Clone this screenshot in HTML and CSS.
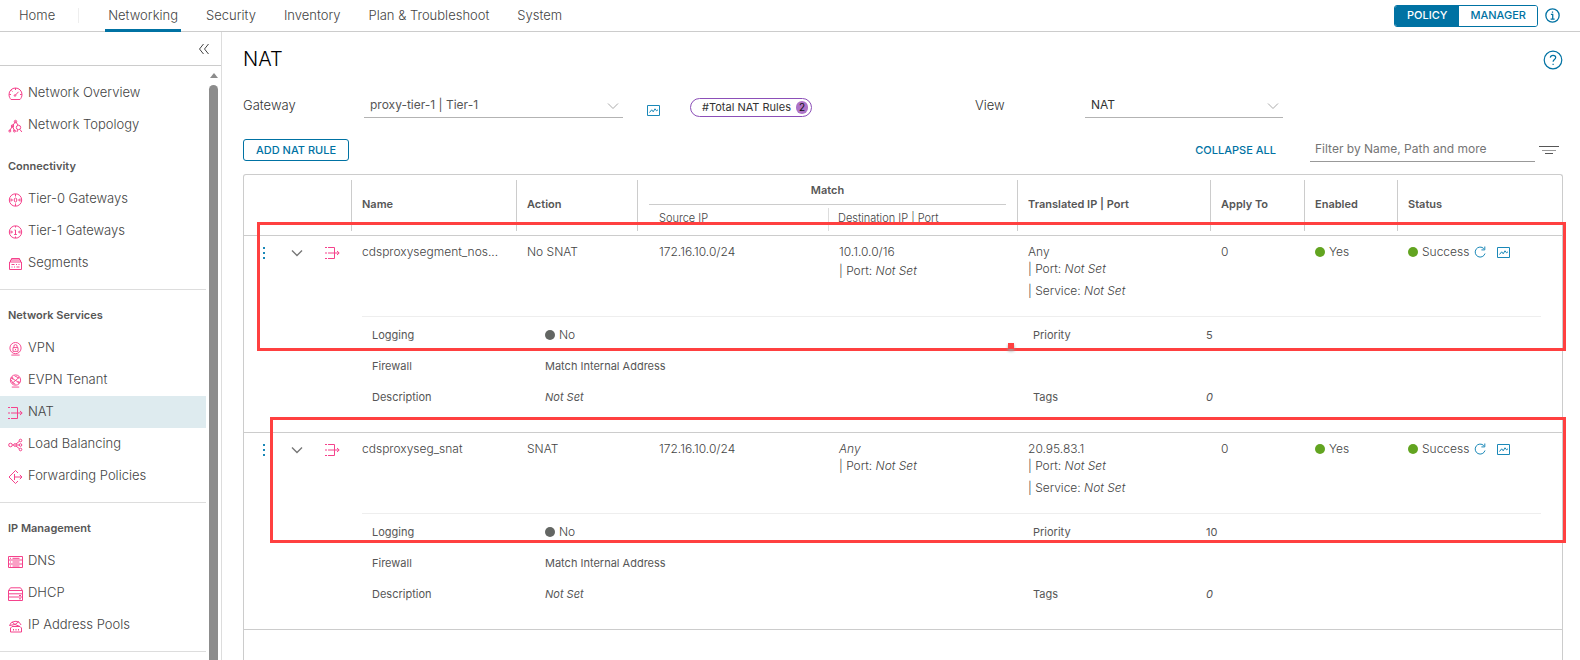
FILE: index.html
```html
<!DOCTYPE html>
<html lang="en">
<head>
<meta charset="utf-8">
<title>NAT - Networking</title>
<link rel="stylesheet" href="styles.css">
</head>
<body>
<svg class="sprite" aria-hidden="true">
  <symbol id="i-overview" viewBox="0 0 15 14"><path d="M3 12.500h9c1.200-1.300 2-3 2-5a6.500 6.500 0 0 0-13 0c0 2 .8 3.700 2 5z"/><path d="M7.500 8l3-3.200M7.500 1v2M1.200 7.500H3M12 7.500h1.800M3.500 3.500l1 1"/><circle cx="7" cy="8.500" r=".8"/></symbol>
  <symbol id="i-topology" viewBox="0 0 15 14"><path d="M7.500 2.500L4.500 7M7.500 2.500L10 6M4.500 7l-3 5M4.500 7l2 5"/><circle cx="7.500" cy="2.500" r="1.200"/><circle cx="4.500" cy="7" r="1.200"/><circle cx="1.800" cy="12" r="1"/><circle cx="6.500" cy="12" r="1"/><circle cx="10.500" cy="8.500" r="2.200"/><path d="M12 10.500l1.800 2.500M9.500 10.500L9 13"/></symbol>
  <symbol id="i-tier0" viewBox="0 0 15 14"><circle cx="7.500" cy="7" r="6.200"/><path d="M7.500 1v2.500M7.500 10.500V13M1.500 7h2.500M11 7h2.500M3 5.500L4.500 7 3 8.500M12 5.500L10.500 7 12 8.500"/><ellipse cx="7.500" cy="7" rx="1.300" ry="2"/></symbol>
  <symbol id="i-tier1" viewBox="0 0 15 14"><circle cx="7.500" cy="7" r="6.200"/><path d="M7.500 1v1.500M7.500 11.500V13M1.500 7h2.500M11 7h2.500M3 5.500L4.500 7 3 8.500M12 5.500L10.500 7 12 8.500M6.500 5h1v4.500M6.200 9.500h2.600"/></symbol>
  <symbol id="i-segments" viewBox="0 0 15 14"><path d="M1.500 5h12v7.500h-12zM2.500 5V3h10v2M3.500 3V1.500h8V3M3.500 7.500h3M8 7.500h1M10.500 7.500h1M3.500 10h1M6 10h1M8.500 10h3"/></symbol>
  <symbol id="i-vpn" viewBox="0 0 15 15"><circle cx="7.500" cy="6.500" r="6"/><path d="M4.800 6h5.400v4H4.800zM5.800 6V4.500a1.700 1.700 0 0 1 3.400 0V6M7.500 7.500v1.200M3 14h9"/></symbol>
  <symbol id="i-evpn" viewBox="0 0 15 15"><circle cx="7.500" cy="6.500" r="5.500"/><path d="M3.500 4.500l7.500 4.500M11.500 3.500L4.500 9.500M6.500 2l5 2.500M3 6.500l1.500 3 3 1.500M3.500 14h8"/><circle cx="4" cy="4.500" r=".8"/><circle cx="11" cy="9" r=".8"/></symbol>
  <symbol id="i-nat" viewBox="0 0 15 14"><path d="M0 1.500h2M3 1.500h6.500v11H3M0 12.500h2M0 7h2M3 7h11M12 5l2.200 2L12 9"/></symbol>
  <symbol id="i-lb" viewBox="0 0 15 14"><circle cx="2.500" cy="7" r="1.800"/><circle cx="7" cy="7" r="1.300"/><circle cx="12.500" cy="2.500" r="1.300"/><circle cx="12.500" cy="7" r="1.300"/><circle cx="12.500" cy="11.500" r="1.300"/><path d="M4.300 7h1.500M8.300 7h3M8 6l3.400-2.700M8 8l3.400 2.700"/></symbol>
  <symbol id="i-forward" viewBox="0 0 15 14"><path d="M10 3L7.500.5 1 7l6.500 6.500L10 11M6.500 4v6M6.500 7h7.500M11.800 4.800L14 7l-2.200 2.200"/></symbol>
  <symbol id="i-dns" viewBox="0 0 15 14"><path d="M.5 1.500h14v11H.5zM.5 5h14M.5 9h14M2 3.300h1M4.500 3.300h7M2 7h1M4.500 7h7M2 11h1M4.500 11h7"/></symbol>
  <symbol id="i-dhcp" viewBox="0 0 15 14"><path d="M.5 3.500L2.500.8h10l2 2.700v10H.5zM.5 3.500h14M.5 6.800h14M.5 10h14M11 8.500h2M11 11.800h2"/></symbol>
  <symbol id="i-pools" viewBox="0 0 15 14"><path d="M1.500 6.500A6 5.500 0 0 1 13 6M4 3l3 2.500L11 2.500M1.500 6.500L7 5.500l5 2M2.500 9l1.500-1.500h8l1.500 1.500v4h-11zM5.500 11.500V10M8 11.500V10M10.500 11.500V10"/></symbol>
  <symbol id="i-chart" viewBox="0 0 13 11"><path d="M.5.5h12v10H.5zM2.500 7.500l2.200-2.700 1.500 2 1.800-3 1.500 2 1.500-1"/></symbol>
  <symbol id="i-refresh" viewBox="0 0 12 12"><path d="M9.800 2.600A5 5 0 1 0 11 7.500M10.800.5v3.400H7.400"/></symbol>
  <symbol id="i-caret" viewBox="0 0 12 8"><path d="M1 1.500l5 5 5-5"/></symbol>
</svg>

<header class="topbar">
  <nav class="topnav" aria-label="Primary">
    <a class="topnav-link topnav-home" href="#home">Home</a>
    <a class="topnav-link is-active" href="#networking" aria-current="page">Networking</a>
    <a class="topnav-link" href="#security">Security</a>
    <a class="topnav-link" href="#inventory">Inventory</a>
    <a class="topnav-link" href="#plan">Plan &amp; Troubleshoot</a>
    <a class="topnav-link" href="#system">System</a>
  </nav>
  <div class="mode">
    <button class="mode-btn is-on" type="button">POLICY</button>
    <button class="mode-btn" type="button">MANAGER</button>
  </div>
  <button class="icon-btn" type="button" aria-label="Information"><svg class="icon-info" viewBox="0 0 14 14"><circle cx="7" cy="7" r="6.200"/><path d="M5.500 6H7.200v4.300M5.200 10.300h3.800M7 3.300v1.200"/></svg></button>
</header>

<div class="shell">
  <aside class="sidebar">
    <div class="sidebar-head">
      <button class="icon-btn" type="button" aria-label="Collapse menu"><svg class="icon-collapse" viewBox="0 0 12 12"><path d="M5.500 1L1.500 6l4 5M10.500 1L6.500 6l4 5"/></svg></button>
    </div>
    <div class="sidebar-body">
      <nav class="menu" aria-label="Networking">
        <a class="menu-link" href="#overview"><svg class="pink"><use href="#i-overview"/></svg>Network Overview</a>
        <a class="menu-link" href="#topology"><svg class="pink"><use href="#i-topology"/></svg>Network Topology</a>
        <section class="menu-group menu-first">
          <h2 class="menu-title">Connectivity</h2>
          <a class="menu-link" href="#tier0"><svg class="pink"><use href="#i-tier0"/></svg>Tier-0 Gateways</a>
          <a class="menu-link" href="#tier1"><svg class="pink"><use href="#i-tier1"/></svg>Tier-1 Gateways</a>
          <a class="menu-link" href="#segments"><svg class="pink"><use href="#i-segments"/></svg>Segments</a>
        </section>
        <section class="menu-group">
          <h2 class="menu-title">Network Services</h2>
          <a class="menu-link" href="#vpn"><svg class="pink"><use href="#i-vpn"/></svg>VPN</a>
          <a class="menu-link" href="#evpn"><svg class="pink"><use href="#i-evpn"/></svg>EVPN Tenant</a>
          <a class="menu-link is-current" href="#nat" aria-current="page"><svg class="pink"><use href="#i-nat"/></svg>NAT</a>
          <a class="menu-link" href="#lb"><svg class="pink"><use href="#i-lb"/></svg>Load Balancing</a>
          <a class="menu-link" href="#forwarding"><svg class="pink"><use href="#i-forward"/></svg>Forwarding Policies</a>
        </section>
        <section class="menu-group">
          <h2 class="menu-title">IP Management</h2>
          <a class="menu-link" href="#dns"><svg class="pink"><use href="#i-dns"/></svg>DNS</a>
          <a class="menu-link" href="#dhcp"><svg class="pink"><use href="#i-dhcp"/></svg>DHCP</a>
          <a class="menu-link" href="#pools"><svg class="pink"><use href="#i-pools"/></svg>IP Address Pools</a>
        </section>
        <div class="menu-group"></div>
      </nav>
      <div class="scroll"><span class="scroll-arrow"></span><span class="scroll-thumb"></span></div>
    </div>
  </aside>

  <main class="main">
    <div class="title-row">
      <h1 class="title">NAT</h1>
      <button class="icon-btn" type="button" aria-label="Help"><svg class="icon-help" viewBox="0 0 20 20"><circle cx="10" cy="10" r="8.800"/><path d="M7.300 7.600c.2-1.500 1.300-2.200 2.700-2.200s2.700.8 2.700 2.200c0 1.900-2.600 2-2.600 4.100M10.100 13.700v1.400"/></svg></button>
    </div>

    <div class="controls">
      <label class="label label-gateway" for="gateway">Gateway</label>
      <div class="pick pick-gateway">
        <select class="select select-soft" id="gateway"><option>proxy-tier-1 | Tier-1</option></select>
        <svg class="pick-caret"><use href="#i-caret"/></svg>
      </div>
      <button class="icon-btn chart-gateway" type="button" aria-label="Gateway statistics"><svg class="chart"><use href="#i-chart"/></svg></button>
      <div class="pill">#Total NAT Rules <span class="pill-count">2</span></div>
      <label class="label label-view" for="view">View</label>
      <div class="pick pick-view">
        <select class="select" id="view"><option>NAT</option></select>
        <svg class="pick-caret"><use href="#i-caret"/></svg>
      </div>
    </div>

    <div class="toolbar">
      <button class="btn" type="button">ADD NAT RULE</button>
      <button class="btn-text" type="button">COLLAPSE ALL</button>
      <input class="filter" type="text" placeholder="Filter by Name, Path and more" aria-label="Filter rules">
      <button class="icon-btn" type="button" aria-label="Filter options"><svg class="icon-filter" viewBox="0 0 20 10"><path d="M0 1.500h20" stroke="#565656"/><path d="M3 5.500h14" stroke="#999"/><path d="M6 8.500h8" stroke="#565656"/></svg></button>
    </div>

    <div class="grid">
      <table class="rules">
        <colgroup><col class="c-tools"><col class="c-name"><col class="c-action"><col class="c-source"><col class="c-dest"><col class="c-trans"><col class="c-apply"><col class="c-enabled"><col class="c-status"></colgroup>
        <thead>
          <tr>
            <td rowspan="2"></td>
            <th rowspan="2"><div class="head">Name</div></th>
            <th rowspan="2"><div class="head">Action</div></th>
            <th colspan="2"><div class="head-match"><span class="head-match-text">Match</span></div></th>
            <th rowspan="2"><div class="head">Translated IP | Port</div></th>
            <th rowspan="2"><div class="head">Apply To</div></th>
            <th rowspan="2"><div class="head">Enabled</div></th>
            <th rowspan="2"><div class="head">Status</div></th>
          </tr>
          <tr>
            <th><div class="head-source">Source IP</div></th>
            <th><div class="head-dest">Destination IP | Port</div></th>
          </tr>
        </thead>
        <tbody class="rule">
          <tr class="rule-main">
            <td class="tools"><div class="tools-row">
              <button class="icon-btn" type="button" aria-label="Actions"><svg class="dots" viewBox="0 0 3 12"><rect width="2" height="2"/><rect y="5" width="2" height="2"/><rect y="10" width="2" height="2"/></svg></button>
              <button class="icon-btn" type="button" aria-label="Collapse"><svg class="caret"><use href="#i-caret"/></svg></button>
              <svg class="pink"><use href="#i-nat"/></svg></div></td>
            <td>cdsproxysegment_nos...</td>
            <td>No SNAT</td>
            <td class="source">172.16.10.0/24</td>
            <td><div>10.1.0.0/16</div><div class="dest-port">| Port: <i>Not Set</i></div></td>
            <td><div>Any</div><div class="sub">| Port: <i>Not Set</i></div><div class="service">| Service: <i>Not Set</i></div></td>
            <td>0</td>
            <td><div class="state"><span class="dot"></span>Yes</div></td>
            <td><div class="state"><span class="dot"></span>Success
              <button class="icon-btn refresh-btn" type="button" aria-label="Refresh"><svg class="refresh"><use href="#i-refresh"/></svg></button>
              <button class="icon-btn stats-btn" type="button" aria-label="Statistics"><svg class="chart"><use href="#i-chart"/></svg></button></div></td>
          </tr>
          <tr>
            <td></td>
            <td class="detail-cell" colspan="8"><div class="detail">
              <span>Logging</span><span class="state big"><span class="dot dot-off"></span>No</span><span>Priority</span><span class="val">5</span>
              <span>Firewall</span><span class="val">Match Internal Address</span><span></span><span></span>
              <span>Description</span><i>Not Set</i><span>Tags</span><i>0</i>
            </div></td>
          </tr>
        </tbody>
        <tbody class="rule">
          <tr class="rule-main">
            <td class="tools"><div class="tools-row">
              <button class="icon-btn" type="button" aria-label="Actions"><svg class="dots" viewBox="0 0 3 12"><rect width="2" height="2"/><rect y="5" width="2" height="2"/><rect y="10" width="2" height="2"/></svg></button>
              <button class="icon-btn" type="button" aria-label="Collapse"><svg class="caret"><use href="#i-caret"/></svg></button>
              <svg class="pink"><use href="#i-nat"/></svg></div></td>
            <td>cdsproxyseg_snat</td>
            <td>SNAT</td>
            <td class="source">172.16.10.0/24</td>
            <td><div><i>Any</i></div><div class="sub">| Port: <i>Not Set</i></div></td>
            <td><div>20.95.83.1</div><div class="sub">| Port: <i>Not Set</i></div><div class="service">| Service: <i>Not Set</i></div></td>
            <td>0</td>
            <td><div class="state"><span class="dot"></span>Yes</div></td>
            <td><div class="state"><span class="dot"></span>Success
              <button class="icon-btn refresh-btn" type="button" aria-label="Refresh"><svg class="refresh"><use href="#i-refresh"/></svg></button>
              <button class="icon-btn stats-btn" type="button" aria-label="Statistics"><svg class="chart"><use href="#i-chart"/></svg></button></div></td>
          </tr>
          <tr>
            <td></td>
            <td class="detail-cell" colspan="8"><div class="detail">
              <span>Logging</span><span class="state big"><span class="dot dot-off"></span>No</span><span>Priority</span><span class="val">10</span>
              <span>Firewall</span><span class="val">Match Internal Address</span><span></span><span></span>
              <span>Description</span><i>Not Set</i><span>Tags</span><i>0</i>
            </div></td>
          </tr>
        </tbody>
      </table>
      <div class="mark mark-first"><span class="mark-handle"></span></div>
      <div class="mark mark-second"></div>
    </div>
  </main>
</div>
</body>
</html>
```
FILE: styles.css
```css
* { box-sizing: border-box; }
body {
  margin: 0;
  height: 100vh;
  overflow: hidden;
  display: flex;
  flex-direction: column;
  background: #fff;
  color: #565656;
  font: 12px/16px Inter, "Noto Sans", sans-serif;
}
button, input, select { font: inherit; }
svg { display: block; fill: none; stroke: currentColor; stroke-width: 1; flex: none; }
.sprite { position: absolute; width: 0; height: 0; }
a { color: inherit; text-decoration: none; }
.icon-btn { display: flex; padding: 0; border: 0; background: none; color: #0072a3; }

/* Top bar */
.topbar { flex: none; display: flex; align-items: center; height: 32px; padding-right: 20px; border-bottom: 1px solid #ccc; }
.topnav { display: flex; flex: 1; align-self: stretch; gap: 22px; font-size: 13px; font-weight: 300; color: #444; }
.topnav-link { padding: 0 3px; line-height: 31px; white-space: nowrap; }
.topnav-home { margin: 8px 0; padding: 0 23px 0 19px; line-height: 15px; border-right: 1px solid #eee; }
.topnav-home + .topnav-link { margin-left: 4px; }
.topnav-link.is-active { height: 32px; border-bottom: 3px solid #0072a3; }
.mode { display: flex; margin-right: 7px; border: 1px solid #0072a3; border-radius: 3px; overflow: hidden; }
.mode-btn { height: 20px; padding: 0 11px 1px; border: 0; background: #fff; color: #0072a3; font-size: 11px; font-weight: 500; line-height: 18px; }
.mode-btn.is-on { padding: 0 12px 1px; background: #0072a3; color: #fff; }
.icon-info { width: 15px; height: 15px; stroke-width: 1.2; }

/* Sidebar */
.shell { flex: 1; min-height: 0; display: flex; }
.sidebar { flex: none; width: 222px; display: flex; flex-direction: column; border-right: 1px solid #ddd; }
.sidebar-head { flex: none; height: 34px; padding-right: 11px; display: flex; align-items: center; justify-content: flex-end; border-bottom: 1px solid #ccc; }
.sidebar-head .icon-btn { color: #444; }
.icon-collapse { width: 12px; height: 12px; }
.sidebar-body { flex: 1; min-height: 0; display: flex; gap: 3px; overflow: hidden; }
.menu { width: 206px; padding-top: 11px; font-size: 13px; font-weight: 300; color: #444; }
.menu-link { display: flex; align-items: center; gap: 5px; height: 32px; padding: 0 0 2px 8px; }
.menu-link.is-current { background: #deebef; }
.menu-group { padding-bottom: 10px; border-top: 1px solid #ddd; }
.menu-first { border-top: 0; }
.menu-title { margin: 0; padding: 16px 8px 8px; color: #565656; font-size: 11px; font-weight: 600; line-height: 18px; }
.pink { width: 15px; height: 14px; color: #f5428c; }
.menu-link .pink { margin-top: 3px; }
.scroll { display: flex; flex-direction: column; align-items: center; gap: 7px; width: 9px; padding-top: 7px; }
.scroll-arrow { border: 4px solid transparent; border-top-width: 0; border-bottom: 5px solid #8c8c8c; }
.scroll-thumb { flex: 1; width: 9px; border-radius: 5px 5px 0 0; background: #8c8c8c; }

/* Main area */
.main { flex: 1; min-width: 0; display: flex; flex-direction: column; padding: 14px 17px 0 21px; }
.title-row { display: flex; justify-content: space-between; align-items: center; height: 27px; }
.title { margin: 0; color: #000; font-size: 20px; font-weight: 300; line-height: 27px; }
.icon-help { width: 20px; height: 20px; stroke-width: 1.2; }
.controls { display: flex; align-items: center; height: 20px; margin-top: 23px; }
.label { padding-bottom: 2px; color: #333; font-size: 13px; font-weight: 300; }
.label-gateway { width: 121px; }
.label-view { margin-left: 163px; width: 110px; }
.pick { display: flex; position: relative; }
.pick-gateway { width: 259px; }
.pick-view { width: 198px; }
.pick-caret { position: absolute; right: 4px; top: 8px; width: 12px; height: 8px; color: #aaa; pointer-events: none; }
.select { width: 100%; height: 24px; padding: 0 20px 2px 6px; border: 0; border-bottom: 1px solid #b3b3b3; border-radius: 0; background: none; color: #333; appearance: none; }
.select-soft { color: #565656; }
.chart { width: 13px; height: 11px; color: #1a88b8; }
.chart-gateway { margin: 8px 30px 0 24px; }
.pill { display: flex; align-items: center; gap: 5px; width: 122px; height: 19px; margin-top: 2px; padding: 0 3px 0 11px; border: 1px solid #8c4fb8; border-radius: 10px; color: #333; font-size: 11px; line-height: 14px; white-space: nowrap; }
.pill-count { width: 13px; height: 13px; border-radius: 7px; background: #ad73c8; color: #111; font-size: 10px; line-height: 13px; text-align: center; }
.toolbar { display: flex; align-items: center; height: 24px; margin-top: 22px; padding-right: 4px; }
.btn, .btn-text { height: 22px; padding: 0 12px 1px; border: 1px solid #0072a3; border-radius: 3px; background: none; color: #0072a3; font-size: 11px; font-weight: 500; line-height: 18px; }
.btn-text { margin-left: auto; margin-right: 21px; border-color: transparent; }
.filter { width: 225px; height: 24px; margin-right: 4px; padding: 0 5px 2px; border: 0; border-bottom: 1px solid #999; color: #565656; }
.filter::placeholder { color: #757575; opacity: 1; }
.icon-filter { width: 20px; height: 10px; }

/* Rules table */
.grid { position: relative; flex: 1; margin-top: 12px; border: 1px solid #ccc; border-bottom: 0; border-radius: 3px 3px 0 0; }
.rules { width: 100%; table-layout: fixed; border-collapse: separate; border-spacing: 0; }
.c-tools { width: 107px; }
.c-name { width: 165px; }
.c-action { width: 121px; }
.c-source { width: 191px; }
.c-dest { width: 189px; }
.c-trans { width: 193px; }
.c-apply { width: 94px; }
.c-enabled { width: 93px; }
.c-status { width: 165px; }
.rules th, .rules td { padding: 0; text-align: left; vertical-align: top; }
.rules th { font-size: 11px; font-weight: 600; white-space: nowrap; }
.head { height: 51px; margin: 5px 0 4px; padding-left: 10px; border-left: 1px solid #ccc; line-height: 48px; }
.head-match { margin-top: 5px; padding: 0 11px; border-left: 1px solid #ccc; text-align: center; }
.head-match-text { display: block; height: 25px; border-bottom: 1px solid #ccc; line-height: 20px; }
.rules .head-source, .rules .head-dest { font-weight: 300; color: #444; }
.head-source { height: 26px; margin-bottom: 4px; padding-left: 21px; border-left: 1px solid #ccc; line-height: 26px; }
.head-dest { height: 23px; margin: 3px 0 4px; padding-left: 9px; border-left: 1px solid #ddd; line-height: 20px; }
.rule-main td { height: 81px; padding: 8px 0 0 11px; border-top: 1px solid #ccc; color: #444; font-weight: 300; white-space: nowrap; }
.rule-main .source { padding-left: 22px; }
.rule-main .tools { padding: 9px 0 0 19px; }
.tools-row { display: flex; align-items: center; height: 16px; gap: 22px; }
.dots { width: 3px; height: 12px; fill: #1a88b8; stroke: none; }
.caret { width: 12px; height: 8px; margin-left: 3px; color: #777; stroke-width: 1.4; }
.dest-port { margin-top: 3px; }
.sub { margin-top: 1px; }
.service { margin-top: 6px; }
.state { display: flex; align-items: center; gap: 4px; }
.dot { flex: none; width: 10px; height: 10px; border-radius: 5px; background: #62a420; }
.dot-off { background: #636663; }
.refresh { width: 12px; height: 12px; color: #1a88b8; }
.refresh-btn { margin-left: 1px; }
.stats-btn { margin-left: 7px; }
.detail-cell { padding: 0; }
.detail { display: grid; grid-template-columns: 173fr 488fr 173fr 335fr; grid-auto-rows: 31px; align-items: center; margin: 0 21px 0 11px; padding: 2px 0 20px 10px; border-top: 1px solid #eee; font-size: 11px; }
.big { font-size: 12px; font-weight: 300; color: #444; }
.rule:last-of-type > tr:last-child > td { border-bottom: 1px solid #ccc; }

/* Highlight frames drawn over the table */
.mark { position: absolute; right: -4px; border: 3px solid #ff4040; pointer-events: none; }
.mark-first { left: 13px; top: 47px; height: 129px; }
.mark-second { left: 26px; top: 242px; height: 126px; }
.mark-handle { position: absolute; right: 549px; bottom: -1px; width: 6px; height: 6px; background: #ff4040; box-shadow: 0 2px 3px #999; }
```
